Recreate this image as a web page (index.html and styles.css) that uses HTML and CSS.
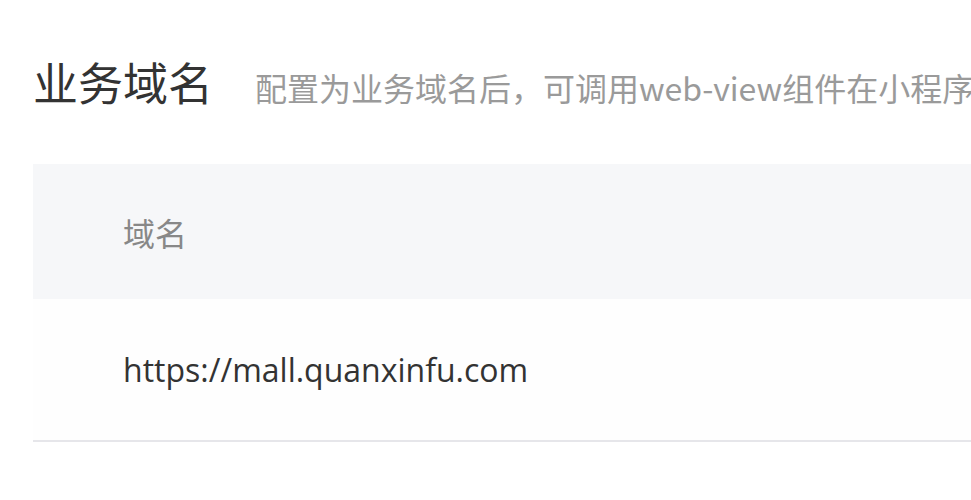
FILE: index.html
```html
<!DOCTYPE html>
<html lang="zh-CN">
<head>
<meta charset="utf-8">
<title>业务域名</title>
<link rel="stylesheet" href="styles.css">
</head>
<body>
<div class="page">
  <div class="head">
    <h1 class="title">业务域名</h1>
    <p class="desc">配置为业务域名后，可调用web-view组件在小程序中打开业务域名下的页面</p>
  </div>
  <div class="table">
    <div class="row row-head"><div class="cell">域名</div></div>
    <div class="row row-body"><div class="cell">https://mall.quanxinfu.com</div></div>
  </div>
</div>
</body>
</html>
```
FILE: styles.css
```css
html, body {
  margin: 0;
  padding: 0;
  background: #ffffff;
}
body {
  font-family: "Open Sans", "Noto Sans CJK SC", sans-serif;
}
.page {
  width: 971px;
  height: 500px;
  overflow: hidden;
  padding-left: 33px;
  box-sizing: border-box;
}
.head {
  display: flex;
  align-items: baseline;
  padding-top: 56px;
  height: 164px;
  box-sizing: border-box;
  white-space: nowrap;
}
.title {
  margin: 0;
  font-family: "Noto Sans CJK SC", sans-serif;
  font-size: 45px;
  line-height: 52px;
  font-weight: normal;
  color: #333333;
}
.desc {
  margin: 0 0 0 42px;
  font-family: "Noto Sans CJK SC", sans-serif;
  font-size: 32px;
  line-height: 52px;
  color: #9a9a9a;
}
.table {
  width: 1200px;
}
.row {
  display: flex;
  align-items: center;
  padding-left: 90px;
  font-size: 32px;
}
.row-head {
  height: 135px;
  background: #f6f7f9;
  color: #888888;
}
.row-body {
  height: 141px;
  background: #fefefe;
  color: #333333;
  border-bottom: 2px solid #e6e6ea;
}
```
